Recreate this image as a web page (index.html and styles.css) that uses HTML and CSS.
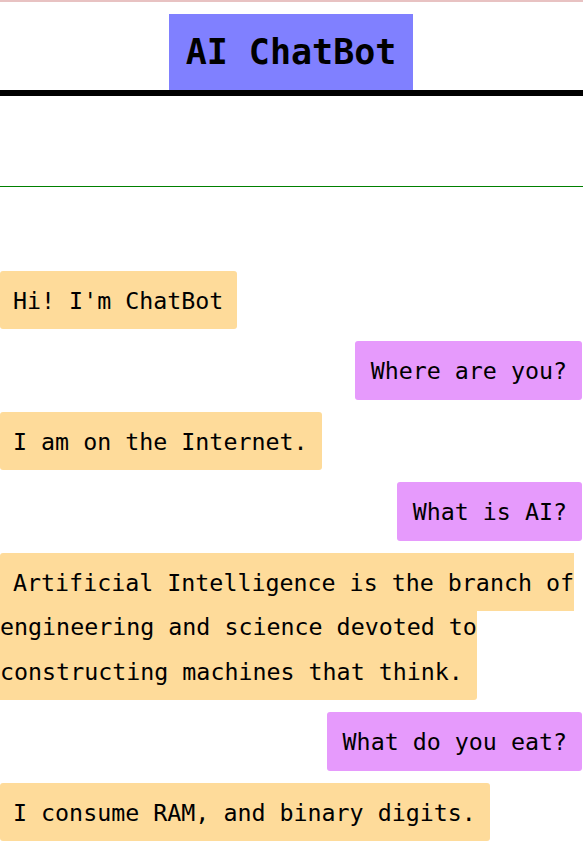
FILE: index.html
```html
<!DOCTYPE html>
<html lang="en">
<head>
<meta charset="utf-8">
<title>AI ChatBot</title>
<link rel="stylesheet" href="styles.css">
</head>
<body>
<header class="top">
  <h1 class="title">AI ChatBot</h1>
</header>
<div class="spacer"></div>
<main class="chat">
  <div class="msg bot"><span class="bubble">Hi! I'm ChatBot</span></div>
  <div class="msg user"><span class="bubble">Where are you?</span></div>
  <div class="msg bot"><span class="bubble">I am on the Internet.</span></div>
  <div class="msg user"><span class="bubble">What is AI?</span></div>
  <div class="msg bot"><span class="bubble">Artificial Intelligence is the branch of engineering and science devoted to constructing machines that think.</span></div>
  <div class="msg user"><span class="bubble">What do you eat?</span></div>
  <div class="msg bot"><span class="bubble">I consume RAM, and binary digits.</span></div>
</main>
</body>
</html>
```

FILE: styles.css
```css
html, body {
  margin: 0;
  padding: 0;
  background: #ffffff;
}

body {
  border-top: 2px solid #e8c2c2;
  font-family: "DejaVu Sans Mono", "Liberation Mono", monospace;
  color: #000;
  overflow: hidden;
}

.top {
  padding-top: 12px;
  text-align: center;
  border-bottom: 6px solid #000;
  padding-right: 1px;
}

.title {
  display: inline-block;
  margin: 0;
  padding: 0 17px;
  height: 76px;
  line-height: 76px;
  font-size: 35px;
  font-weight: bold;
  background: #8080ff;
  vertical-align: top;
}

.spacer {
  height: 90px;
  border-bottom: 1px solid #008000;
}

.chat {
  padding: 91.5px 1px 0 0;
}

.msg {
  font-size: 23.3px;
  line-height: 44.5px;
  margin-bottom: 26px;
}

.msg.user {
  text-align: right;
}

.bubble {
  padding: 15.8px 14px 15.8px 13px;
  border-radius: 3px;
}

.bot .bubble {
  background: #fedb9a;
}

.user .bubble {
  padding-left: 16px;
  padding-right: 15px;
  background: #e69afc;
}
```
